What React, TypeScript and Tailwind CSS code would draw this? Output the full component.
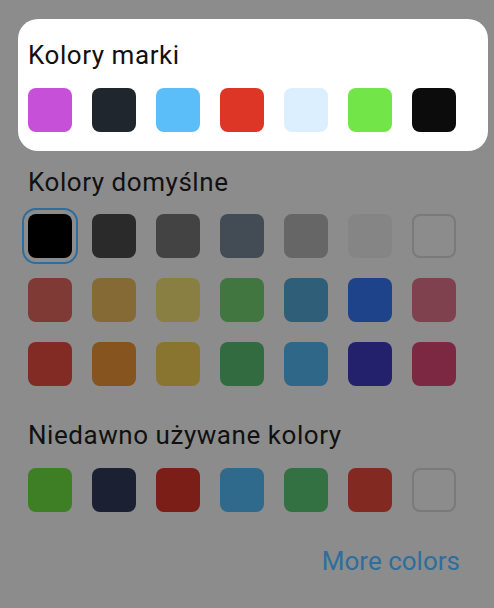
import React from 'react';

const brandColors = ['#c650d8', '#1f262e', '#5bbef8', '#dd3526', '#dcefff', '#72e548', '#0c0c0c'];

// default palette, shown dimmed behind the highlighted card
const defaultRows = [
  ['#000000', '#2a2a2a', '#434343', '#434b55', '#666666', '#858585', ''],
  ['#7f3a36', '#856a36', '#8a7f42', '#427640', '#2f5e78', '#1e438a', '#80414f'],
  ['#822a24', '#85541f', '#8a7530', '#326b40', '#2f6789', '#23216b', '#7d2843'],
];

const recentColors = ['#3e7e25', '#1b2133', '#7a1e17', '#2f6a8c', '#337143', '#822a22', ''];

function Swatch({ color, selected }: { color: string; selected?: boolean }) {
  if (!color) {
    return <div className="w-11 h-11 rounded-[8px] border-2 border-[#7a7a7a]" />;
  }
  return (
    <div
      className={`w-11 h-11 rounded-[8px] ${
        selected ? 'outline-2 outline-offset-[4px] outline-[#2e6e9e]' : ''
      }`}
      style={{ backgroundColor: color }}
    />
  );
}

function SwatchRow({ colors, selectedIndex }: { colors: string[]; selectedIndex?: number }) {
  return (
    <div className="flex gap-5">
      {colors.map((c, i) => (
        <Swatch key={i} color={c} selected={i === selectedIndex} />
      ))}
    </div>
  );
}

export default function App() {
  return (
    <div
      className="min-h-screen w-[494px] h-[608px] bg-[#8c8c8c] overflow-hidden"
      style={{ fontFamily: 'Roboto, "Noto Sans", sans-serif' }}
    >
      {/* Brand colors card (highlighted) */}
      <div className="ml-[18px] mt-[19px] w-[470px] h-[132px] rounded-[20px] bg-white pt-[21px] pl-[10px]">
        <h2 className="text-[26px] leading-[30px] tracking-[0.55px] text-[#111]">Kolory marki</h2>
        <div className="mt-[18px]">
          <SwatchRow colors={brandColors} />
        </div>
      </div>

      <div className="pl-[28px] pr-[34px]">
        {/* Default colors */}
        <h2 className="mt-[16px] text-[26px] leading-[30px] tracking-[0.55px] text-[#111]">Kolory domyślne</h2>
        <div className="mt-[17px] flex flex-col gap-5">
          {defaultRows.map((row, i) => (
            <SwatchRow key={i} colors={row} selectedIndex={i === 0 ? 0 : undefined} />
          ))}
        </div>

        {/* Recently used */}
        <h2 className="mt-[34px] text-[26px] leading-[30px] tracking-[0.55px] text-[#111]">
          Niedawno używane kolory
        </h2>
        <div className="mt-[18px]">
          <SwatchRow colors={recentColors} />
        </div>

        <div className="mt-[34px] text-right">
          <button className="text-[26px] leading-[30px] text-[#2e6e9e]">More colors</button>
        </div>
      </div>
    </div>
  );
}
